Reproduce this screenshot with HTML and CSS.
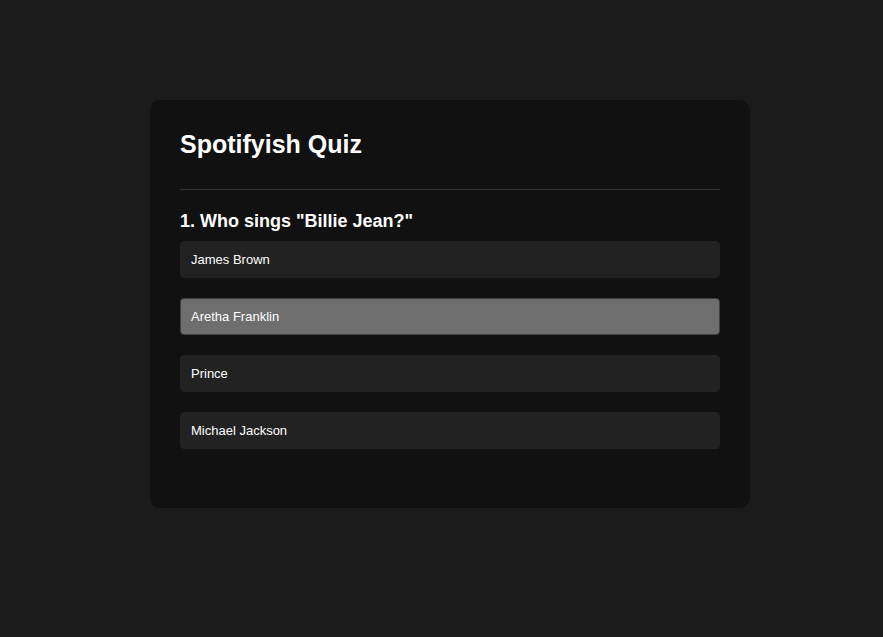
FILE: index.html
```html
<!DOCTYPE html>
<html lang="en">
<head>
<meta charset="utf-8">
<title>Spotifyish Quiz</title>
<link rel="stylesheet" href="styles.css">
</head>
<body>
<main class="page">
  <section class="card">
    <h1 class="title">Spotifyish Quiz</h1>
    <hr class="divider">
    <h2 class="question">1. Who sings "Billie Jean?"</h2>
    <ul class="options">
      <li class="option">James Brown</li>
      <li class="option option--active">Aretha Franklin</li>
      <li class="option">Prince</li>
      <li class="option">Michael Jackson</li>
    </ul>
  </section>
</main>
</body>
</html>
```
FILE: styles.css
```css
html, body {
  margin: 0;
  padding: 0;
  background: #1b1b1b;
  color: #ffffff;
  font-family: "Liberation Sans", Arial, Helvetica, sans-serif;
}

.page {
  padding: 100px 0 0 150px;
}

.card {
  box-sizing: border-box;
  width: 600px;
  height: 408px;
  background: #111111;
  border-radius: 10px;
  padding: 30px;
}

.title {
  margin: 0 0 30px;
  font-size: 25px;
  font-weight: bold;
  line-height: 29px;
}

.divider {
  margin: 0 0 21px;
  border: 0;
  border-top: 1px solid #333333;
  height: 0;
}

.question {
  margin: 0 0 9px;
  font-size: 18px;
  font-weight: bold;
  line-height: 21px;
}

.options {
  list-style: none;
  margin: 0;
  padding: 0;
  display: flex;
  flex-direction: column;
  gap: 20px;
}

.option {
  box-sizing: border-box;
  height: 37px;
  display: flex;
  align-items: center;
  padding: 0 10px;
  background: #222222;
  border: 1px solid #222222;
  border-radius: 4px;
  font-size: 13px;
}

.option--active {
  background: #6e6e6e;
  border-color: #3f3f3f;
}
```
